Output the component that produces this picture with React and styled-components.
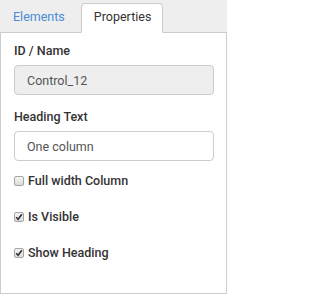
import React from 'react';
import styled, { createGlobalStyle } from 'styled-components';

const GlobalStyle = createGlobalStyle`
  html, body {
    margin: 0;
    background: #fff;
    font-family: Roboto, 'Liberation Sans', sans-serif;
  }
`;

const Frame = styled.div`
  width: 227px;
  height: 294px;
  display: flex;
  flex-direction: column;
  background: #eee;
  color: #333;
  font-size: 12.5px;
`;

const TabBar = styled.div`
  height: 32px;
  display: flex;
  align-items: flex-end;
  border-bottom: 1px solid #ccc;
`;

const Tab = styled.div`
  margin-right: 4px;
  margin-bottom: -1px;
  padding: 5px 11px 7px 12px;
  line-height: 16px;
  border: 1px solid ${(p) => (p.active ? '#ccc' : 'transparent')};
  border-bottom-color: ${(p) => (p.active ? '#fff' : 'transparent')};
  border-radius: 4px 4px 0 0;
  background: ${(p) => (p.active ? '#fff' : 'transparent')};
  color: ${(p) => (p.active ? '#333' : '#4a8bd6')};
  cursor: pointer;
`;

const Panel = styled.div`
  flex: 1;
  background: #fff;
  border: 1px solid #ccc;
  border-top: none;
  padding: 10px 12px 0 13px;
`;

const Field = styled.div`
  margin-bottom: 14px;
`;

const Label = styled.label`
  display: block;
  font-weight: 500;
  line-height: 16px;
  margin-bottom: 6px;
`;

const Input = styled.input`
  box-sizing: border-box;
  width: 100%;
  height: 30px;
  padding: 0 12px;
  border: 1px solid #ccc;
  border-radius: 4px;
  background: ${(p) => (p.disabled ? '#eee' : '#fff')};
  color: #555;
  font: inherit;
  outline: none;
`;

const CheckList = styled.div`
  display: flex;
  flex-direction: column;
  gap: 20px;
  margin-top: -2px;
`;

const CheckRow = styled.label`
  display: flex;
  align-items: center;
  gap: 4px;
  line-height: 16px;
  font-weight: 500;
`;

const Box = styled.span`
  box-sizing: border-box;
  width: 10px;
  height: 10px;
  border: 1px solid #a6a6a6;
  border-radius: 2px;
  background: linear-gradient(#f4f4f4, #dcdcdc);
  display: flex;
  align-items: center;
  justify-content: center;
`;

const CheckBox = ({ checked }) => (
  <Box>
    {checked && (
      <svg width="8" height="8" viewBox="0 0 8 8">
        <path d="M1.2 4.2 L3.1 6.2 L6.9 1.3" fill="none" stroke="#333" strokeWidth="1.6" />
      </svg>
    )}
  </Box>
);

export default function App() {
  return (
    <>
      <GlobalStyle />
      <Frame>
        <TabBar>
          <Tab>Elements</Tab>
          <Tab active>Properties</Tab>
        </TabBar>
        <Panel>
          <Field>
            <Label>ID / Name</Label>
            <Input disabled value="Control_12" readOnly />
          </Field>
          <Field>
            <Label>Heading Text</Label>
            <Input value="One column" readOnly />
          </Field>
          <CheckList>
            <CheckRow>
              <CheckBox />
              Full width Column
            </CheckRow>
            <CheckRow>
              <CheckBox checked />
              Is Visible
            </CheckRow>
            <CheckRow>
              <CheckBox checked />
              Show Heading
            </CheckRow>
          </CheckList>
        </Panel>
      </Frame>
    </>
  );
}
